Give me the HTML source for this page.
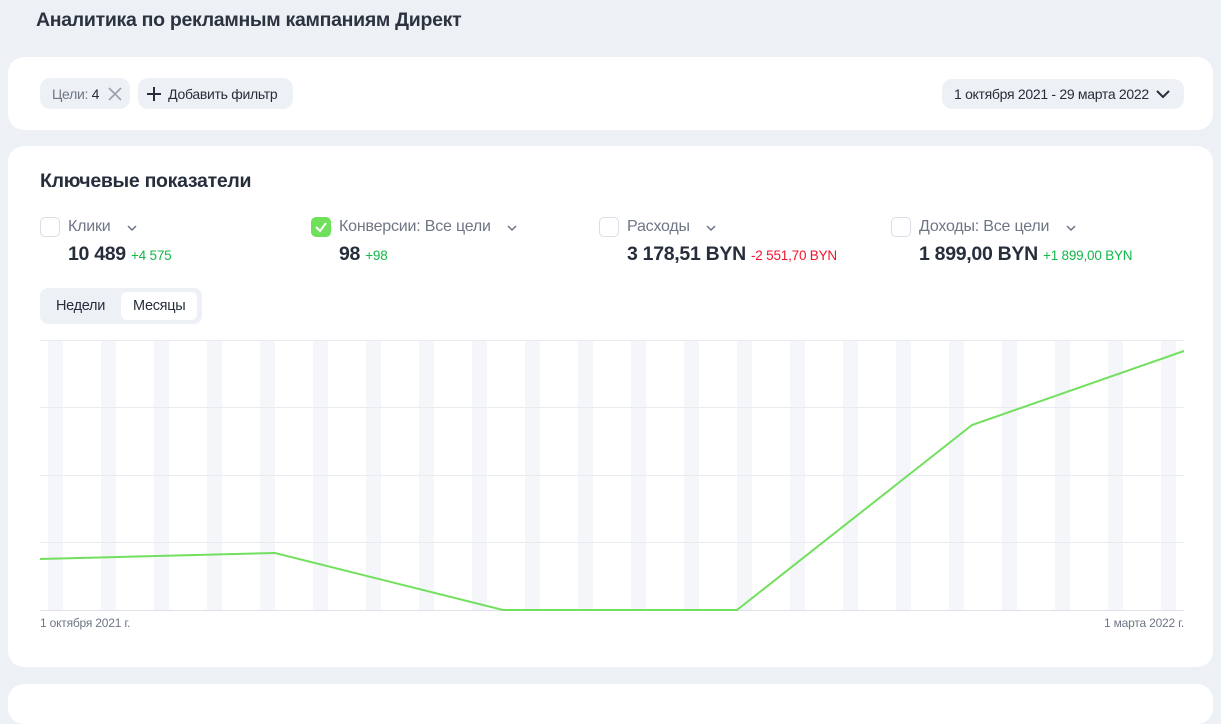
<!DOCTYPE html>
<html><head><meta charset="utf-8"><style>
*{margin:0;padding:0;box-sizing:border-box}
body{width:1221px;height:705px;overflow:hidden;background:#edf1f5;font-family:"Liberation Sans",sans-serif;color:#262d3b;position:relative}
.abs{position:absolute;white-space:nowrap}
.card{position:absolute;left:8px;width:1205px;background:#fff;border-radius:16px}
.chip{position:absolute;background:#edf1f5;border-radius:10px;font-size:14px;letter-spacing:-0.3px;display:flex;align-items:center}
.cb{position:absolute;width:20px;height:20px;border:1px solid #d9dee6;border-radius:5px;background:#fff}
.lbl{position:absolute;font-size:16px;color:#6e7686;letter-spacing:-0.2px;white-space:nowrap}
.val{position:absolute;font-size:19.5px;font-weight:bold;color:#262d3b;letter-spacing:-0.3px;white-space:nowrap}
.val span{font-size:13.5px;font-weight:normal;letter-spacing:-0.2px}
.g{color:#12b84a}.r{color:#f3122c}
</style></head><body>
<div class="abs" style="left:36px;top:9px;font-size:19.5px;font-weight:bold;letter-spacing:-0.3px;color:#2c3240">Аналитика по рекламным кампаниям Директ</div>
<div class="card" style="top:57px;height:73px"></div>
<div class="chip" style="left:40px;top:78px;width:90px;height:31px;padding-left:12px;color:#6e7686">Цели: <span style="color:#262d3b">&nbsp;4</span>
<svg style="margin-left:9px" width="14" height="14" viewBox="0 0 14 14"><path d="M1 1L13 13M13 1L1 13" stroke="#9aa1ad" stroke-width="1.6"/></svg></div>
<div class="chip" style="left:138px;top:78px;width:155px;height:31px;padding-left:9px;color:#262d3b">
<svg width="14" height="14" viewBox="0 0 14 14"><path d="M7 0V14M0 7H14" stroke="#262d3b" stroke-width="2"/></svg>&nbsp;&nbsp;Добавить фильтр</div>
<div class="chip" style="left:942px;top:79px;width:242px;height:30px;padding-left:12px;color:#262d3b">1 октября 2021 - 29 марта 2022
<svg style="margin-left:7px" width="14" height="9" viewBox="0 0 14 9"><path d="M1 1L7 7L13 1" stroke="#262d3b" stroke-width="2" fill="none"/></svg></div>

<div class="card" style="top:146px;height:521px"></div>
<div class="card" style="top:684px;height:40px"></div>
<div class="abs" style="left:40px;top:170px;font-size:19.5px;font-weight:bold;letter-spacing:-0.3px">Ключевые показатели</div>

<div class="cb" style="left:40px;top:217px"></div>
<div class="lbl" style="left:68px;top:218px">Клики <svg style="margin-left:12px" width="10" height="6" viewBox="0 0 10 6"><path d="M1 1L5 5L9 1" stroke="#6e7686" stroke-width="1.5" fill="none"/></svg></div>
<div class="val" style="left:68px;top:243px">10 489 <span class="g">+4 575</span></div>

<div class="cb" style="left:311px;top:217px;background:#6ee05a;border-color:#6ee05a"><svg width="18" height="18" viewBox="0 0 18 18"><path d="M4 9L8 13L14 5" stroke="#fff" stroke-width="2" fill="none"/></svg></div>
<div class="lbl" style="left:339px;top:218px">Конверсии: Все цели <svg style="margin-left:12px" width="10" height="6" viewBox="0 0 10 6"><path d="M1 1L5 5L9 1" stroke="#6e7686" stroke-width="1.5" fill="none"/></svg></div>
<div class="val" style="left:339px;top:243px">98 <span class="g">+98</span></div>

<div class="cb" style="left:599px;top:217px"></div>
<div class="lbl" style="left:627px;top:218px">Расходы <svg style="margin-left:12px" width="10" height="6" viewBox="0 0 10 6"><path d="M1 1L5 5L9 1" stroke="#6e7686" stroke-width="1.5" fill="none"/></svg></div>
<div class="val" style="left:627px;top:243px">3 178,51 BYN <span class="r">-2 551,70 BYN</span></div>

<div class="cb" style="left:891px;top:217px"></div>
<div class="lbl" style="left:919px;top:218px">Доходы: Все цели <svg style="margin-left:12px" width="10" height="6" viewBox="0 0 10 6"><path d="M1 1L5 5L9 1" stroke="#6e7686" stroke-width="1.5" fill="none"/></svg></div>
<div class="val" style="left:919px;top:243px">1 899,00 BYN <span class="g">+1 899,00 BYN</span></div>

<div class="abs" style="left:40px;top:288px;width:162px;height:36px;background:#edf1f5;border-radius:8px"></div>
<div class="abs" style="left:121px;top:292px;width:76px;height:28px;background:#fff;border-radius:6px"></div>
<div class="abs" style="left:56px;top:298px;font-size:14.5px;letter-spacing:-0.3px">Недели</div>
<div class="abs" style="left:133px;top:298px;font-size:14.5px;letter-spacing:-0.3px">Месяцы</div>

<svg class="abs" style="left:0;top:0" width="1221" height="705">
<g fill="#f4f6fa">
<rect x="48" y="341" width="15" height="269"/><rect x="101" y="341" width="15" height="269"/><rect x="154" y="341" width="15" height="269"/><rect x="207" y="341" width="15" height="269"/><rect x="260" y="341" width="15" height="269"/><rect x="313" y="341" width="15" height="269"/><rect x="366" y="341" width="15" height="269"/><rect x="419" y="341" width="15" height="269"/><rect x="472" y="341" width="15" height="269"/><rect x="525" y="341" width="15" height="269"/><rect x="578" y="341" width="15" height="269"/><rect x="631" y="341" width="15" height="269"/><rect x="684" y="341" width="15" height="269"/><rect x="737" y="341" width="15" height="269"/><rect x="790" y="341" width="15" height="269"/><rect x="843" y="341" width="15" height="269"/><rect x="896" y="341" width="15" height="269"/><rect x="949" y="341" width="15" height="269"/><rect x="1002" y="341" width="15" height="269"/><rect x="1055" y="341" width="15" height="269"/><rect x="1108" y="341" width="15" height="269"/><rect x="1161" y="341" width="15" height="269"/>
</g>
<g stroke="#e8ebf0" stroke-width="1">
<line x1="40" y1="340.5" x2="1184" y2="340.5"/><line x1="40" y1="407.5" x2="1184" y2="407.5"/><line x1="40" y1="475.5" x2="1184" y2="475.5"/><line x1="40" y1="542.5" x2="1184" y2="542.5"/><line x1="40" y1="610.5" x2="1184" y2="610.5" stroke="#dfe3e9"/>
</g>
<polyline points="40,559 275,553 503,610 737,610 972,425 1184,351" fill="none" stroke="#72e05e" stroke-width="2"/>
<text x="40" y="627" font-family="Liberation Sans" font-size="12" fill="#6e7686" letter-spacing="-0.2">1 октября 2021 г.</text>
<text x="1184" y="627" text-anchor="end" font-family="Liberation Sans" font-size="12" fill="#6e7686" letter-spacing="-0.2">1 марта 2022 г.</text>
</svg>
</body></html>
